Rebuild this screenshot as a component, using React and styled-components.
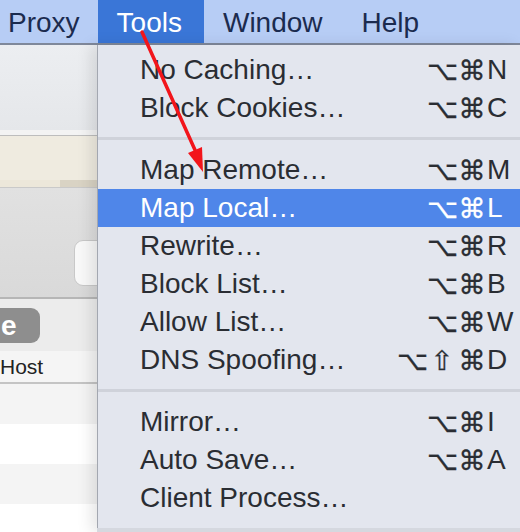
import React from 'react';
import styled, { createGlobalStyle } from 'styled-components';

const GlobalStyle = createGlobalStyle`
  html, body {
    margin: 0;
    padding: 0;
  }
  body {
    width: 520px;
    height: 532px;
    overflow: hidden;
    font-family: "Liberation Sans", Arial, sans-serif;
  }
`;

const Screen = styled.div`
  position: relative;
  width: 520px;
  height: 532px;
  display: flex;
  flex-direction: column;
  overflow: hidden;
`;

const MenuBar = styled.div`
  display: flex;
  height: 43px;
  flex-shrink: 0;
  background: #b7cdf5;
  border-bottom: 2px solid #7f889a;
`;

const MenuTitle = styled.div`
  display: flex;
  align-items: center;
  padding: 2px ${p => (p.$active ? 22 : 20)}px 0 19px;
  font-size: 28px;
  color: ${p => (p.$active ? '#ffffff' : '#1b2b4f')};
  background: ${p => (p.$active ? '#3a76d7' : 'transparent')};

  &:first-child {
    padding-left: 8px;
    padding-right: 18px;
  }
`;

const Body = styled.div`
  display: flex;
  flex: 1;
  min-height: 0;
`;

/* window behind the menu */
const LeftPane = styled.div`
  width: 97px;
  flex-shrink: 0;
  display: flex;
  flex-direction: column;
  overflow: hidden;
  background: #ffffff;
`;

const Toolbar = styled.div`
  height: 85px;
  flex-shrink: 0;
  background: linear-gradient(180deg, #eceef1, #e5e7ea);
`;

const Rule = styled.div`
  height: ${p => p.$h}px;
  flex-shrink: 0;
  background: ${p => p.$c};
`;

const Notice = styled.div`
  height: 44px;
  flex-shrink: 0;
  background: #efebe0;
`;

const NoticeFoot = styled.div`
  height: 7px;
  flex-shrink: 0;
  background: linear-gradient(90deg, #ece7da 60px, #d9d3c4 60px);
`;

const Panel = styled.div`
  height: 109px;
  flex-shrink: 0;
  display: flex;
  justify-content: flex-end;
  align-items: flex-start;
  padding-top: 52px;
  box-sizing: border-box;
  background: linear-gradient(180deg, #e1e1e1, #d9d9d9);
`;

const PanelButton = styled.div`
  width: 40px;
  height: 46px;
  margin-right: -17px;
  border-radius: 9px;
  background: #f8f8f8;
  border: 1px solid #c8c8c8;
  box-sizing: border-box;
`;

const FilterBar = styled.div`
  height: 52px;
  flex-shrink: 0;
  padding-top: 9px;
  box-sizing: border-box;
  background: #ececec;
`;

const Pill = styled.div`
  width: 40px;
  height: 35px;
  padding-left: 1px;
  box-sizing: border-box;
  border-radius: 0 9px 9px 0;
  background: #8e8e8e;
  color: #ffffff;
  font-size: 28px;
  font-weight: 600;
  line-height: 35px;
`;

const HeaderRow = styled.div`
  height: 31px;
  flex-shrink: 0;
  line-height: 32px;
  font-size: 21px;
  color: #222222;
  background: #f5f5f5;
  border-bottom: 2px solid #c4c4c4;
`;

const Row = styled.div`
  height: 40px;
  flex-shrink: 0;
  background: ${p => (p.$odd ? '#f4f4f4' : '#ffffff')};
`;

const RightCol = styled.div`
  flex: 1;
  display: flex;
  flex-direction: column;
  background: #d5d8df;
  position: relative;
  z-index: 1;
  box-shadow: -6px 0 14px rgba(0, 0, 0, 0.1);
`;

const Menu = styled.div`
  display: flex;
  flex-direction: column;
  padding: 6px 0 11px;
  background: #e3e6ee;
  border-left: 1px solid #a3a7b0;
`;

const Item = styled.div`
  display: flex;
  align-items: center;
  height: 38px;
  padding-left: 42px;
  font-size: 28px;
  color: ${p => (p.$active ? '#ffffff' : '#2a2d33')};
  background: ${p => (p.$active ? '#4f86e9' : 'transparent')};
`;

const Label = styled.span`
  flex: 1;
  white-space: nowrap;
`;

const Mods = styled.span`
  display: flex;
`;

const Mod = styled.span`
  width: 30px;
  text-align: center;
  font-family: "DejaVu Sans", sans-serif;
  font-size: 27px;
  -webkit-text-stroke: 0.3px currentColor;
`;

const Key = styled.span`
  width: 33px;
`;

const Separator = styled.div`
  height: 3px;
  margin: 10px 0 11px;
  background: #cfd2da;
`;

const ArrowLayer = styled.svg`
  position: absolute;
  top: 0;
  left: 0;
  z-index: 5;
  pointer-events: none;
`;

const groups = [
  [
    ['No Caching…', ['⌥', '⌘'], 'N'],
    ['Block Cookies…', ['⌥', '⌘'], 'C'],
  ],
  [
    ['Map Remote…', ['⌥', '⌘'], 'M'],
    ['Map Local…', ['⌥', '⌘'], 'L', true],
    ['Rewrite…', ['⌥', '⌘'], 'R'],
    ['Block List…', ['⌥', '⌘'], 'B'],
    ['Allow List…', ['⌥', '⌘'], 'W'],
    ['DNS Spoofing…', ['⌥', '⇧', '⌘'], 'D'],
  ],
  [
    ['Mirror…', ['⌥', '⌘'], 'I'],
    ['Auto Save…', ['⌥', '⌘'], 'A'],
    ['Client Process…', [], ''],
  ],
];

export default function App() {
  return (
    <Screen>
      <GlobalStyle />
      <MenuBar>
        <MenuTitle>Proxy</MenuTitle>
        <MenuTitle $active>Tools</MenuTitle>
        <MenuTitle>Window</MenuTitle>
        <MenuTitle>Help</MenuTitle>
      </MenuBar>
      <Body>
        <LeftPane>
          <Toolbar />
          <Rule $h={5} $c="#f3f3f3" />
          <Rule $h={1} $c="#bdbdbd" />
          <Notice />
          <NoticeFoot />
          <Rule $h={1} $c="#c9c9c9" />
          <Panel>
            <PanelButton />
          </Panel>
          <Rule $h={2} $c="#b6b6b6" />
          <FilterBar>
            <Pill>e</Pill>
          </FilterBar>
          <HeaderRow>Host</HeaderRow>
          {[0, 1, 2, 3, 4].map(i => (
            <Row key={i} $odd={i % 2 === 0} />
          ))}
        </LeftPane>
        <RightCol>
          <Menu>
            {groups.map((items, g) => (
              <React.Fragment key={g}>
                {g > 0 && <Separator />}
                {items.map(([label, mods, key, active]) => (
                  <Item key={label} $active={active}>
                    <Label>{label}</Label>
                    <Mods>
                      {mods.map(m => (
                        <Mod key={m}>{m}</Mod>
                      ))}
                    </Mods>
                    <Key>{key}</Key>
                  </Item>
                ))}
              </React.Fragment>
            ))}
          </Menu>
        </RightCol>
      </Body>
      <ArrowLayer width="520" height="532" viewBox="0 0 520 532">
        <line x1="142" y1="32" x2="195" y2="150" stroke="#f2151b" strokeWidth="3.5" strokeLinecap="round" />
        <polygon points="203,172 188,153 202,147" fill="#f2151b" />
      </ArrowLayer>
    </Screen>
  );
}
